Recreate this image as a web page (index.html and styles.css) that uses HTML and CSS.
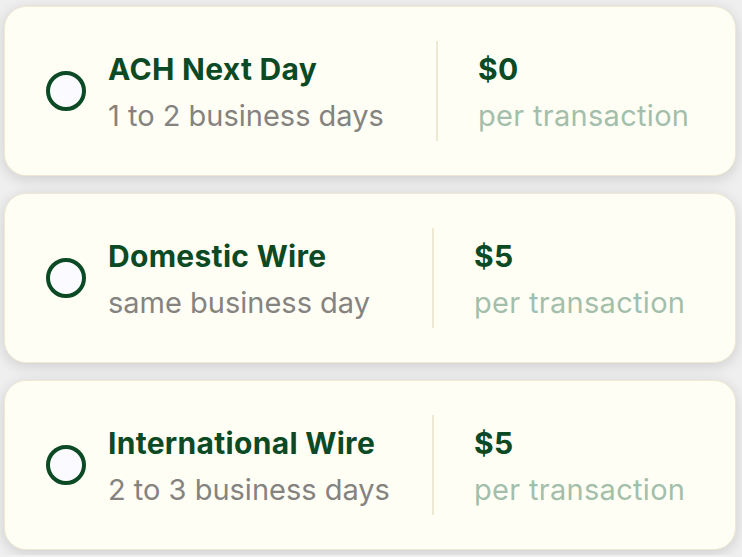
FILE: index.html
```html
<!DOCTYPE html>
<html lang="en">
<head>
    <meta charset="UTF-8">
    <title>Transfer Options</title>
    <link rel="stylesheet" href="styles.css">
</head>
<body>
    <!-- Transfer speed options -->
    <div class="options">
        <label class="option">
            <span class="radio"></span>
            <span class="option-info">
                <span class="option-title">ACH Next Day</span>
                <span class="option-sub">1 to 2 business days</span>
            </span>
            <span class="divider"></span>
            <span class="option-price">
                <span class="price">$0</span>
                <span class="price-sub">per transaction</span>
            </span>
        </label>

        <label class="option option-narrow">
            <span class="radio"></span>
            <span class="option-info">
                <span class="option-title">Domestic Wire</span>
                <span class="option-sub">same business day</span>
            </span>
            <span class="divider"></span>
            <span class="option-price">
                <span class="price">$5</span>
                <span class="price-sub">per transaction</span>
            </span>
        </label>

        <label class="option option-narrow">
            <span class="radio"></span>
            <span class="option-info">
                <span class="option-title">International Wire</span>
                <span class="option-sub">2 to 3 business days</span>
            </span>
            <span class="divider"></span>
            <span class="option-price">
                <span class="price">$5</span>
                <span class="price-sub">per transaction</span>
            </span>
        </label>
    </div>
</body>
</html>
```

FILE: styles.css
```css
body {
    margin: 0;
    background-color: #efefef;
    font-family: Inter, 'Liberation Sans', sans-serif;
}

.options {
    display: flex;
    flex-direction: column;
    gap: 17px;
    padding: 6px 6px 5px 4px;
}

.option {
    display: flex;
    align-items: center;
    height: 170px;
    box-sizing: border-box;
    padding: 0 41px;
    background-color: #fffef5;
    border: 1px solid #efe9d2;
    border-radius: 22px;
    box-shadow: 0 3px 14px rgba(0, 0, 0, 0.14);
    cursor: pointer;
}

.radio {
    flex: none;
    width: 40px;
    height: 40px;
    box-sizing: border-box;
    border: 4px solid #0b4a24;
    border-radius: 50%;
    background-color: #fbfbff;
    margin-right: 22px;
}

.option-info,
.option-price {
    display: flex;
    flex-direction: column;
    padding-top: 3px;
}

.option-info {
    flex: none;
    width: 328px;
}

.option-narrow .option-info {
    width: 324px;
}

.option-title,
.price {
    font-size: 30px;
    font-weight: 700;
    line-height: 45px;
    color: #0b4a24;
    letter-spacing: 0.3px;
}

.option-sub {
    font-size: 29px;
    line-height: 47px;
    color: #858380;
}

.divider {
    flex: none;
    width: 2px;
    height: 100px;
    background-color: #efe9d3;
    margin-right: 40px;
}

.price-sub {
    font-size: 29px;
    line-height: 47px;
    color: #a3bfab;
    letter-spacing: 0.3px;
}
```
